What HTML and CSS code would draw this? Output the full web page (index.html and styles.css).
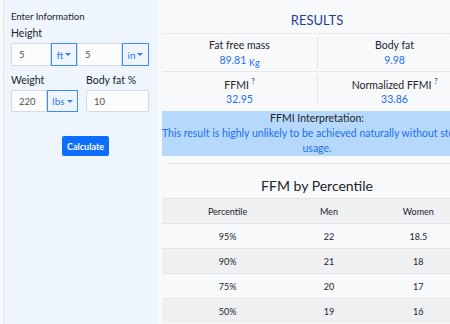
FILE: index.html
```html
<!DOCTYPE html>
<html lang="en">
<head>
    <meta charset="UTF-8">
    <meta name="viewport" content="width=device-width, initial-scale=1.0">
    <title>FFMI Calculator</title>
    <link rel="stylesheet" href="styles.css">
</head>
<body>
    <div class="page">
        <div class="sidebar">
            <div class="form-title">Enter Information</div>
            <div class="field-label">Height</div>
            <div class="input-row">
                <div class="input-box w-40">5</div>
                <div class="unit-btn w-26">ft <span class="caret"></span></div>
                <div class="input-box w-45">5</div>
                <div class="unit-btn w-27">in <span class="caret"></span></div>
            </div>

            <div class="pair-row">
                <div class="pair-col">
                    <div class="field-label">Weight</div>
                    <div class="input-row short">
                        <div class="input-box w-36">220</div>
                        <div class="unit-btn w-31">lbs <span class="caret"></span></div>
                    </div>
                </div>
                <div class="pair-col">
                    <div class="field-label">Body fat %</div>
                    <div class="input-row short">
                        <div class="input-box w-63">10</div>
                    </div>
                </div>
            </div>

            <button class="calc-btn">Calculate</button>
        </div>

        <div class="main">
            <h2 class="results-title">RESULTS</h2>

            <div class="result-grid">
                <div class="result-cell first-row">
                    <div class="result-label">Fat free mass</div>
                    <div class="result-value">89.81 <span class="unit">Kg</span></div>
                </div>
                <div class="result-cell first-row divided">
                    <div class="result-label">Body fat</div>
                    <div class="result-value">9.98</div>
                </div>
                <div class="result-cell">
                    <div class="result-label">FFMI <sup>?</sup></div>
                    <div class="result-value">32.95</div>
                </div>
                <div class="result-cell divided">
                    <div class="result-label">Normalized FFMI <sup>?</sup></div>
                    <div class="result-value">33.86</div>
                </div>
            </div>

            <div class="interpretation">
                <div class="interp-title">FFMI Interpretation:</div>
                <div class="interp-text">This result is highly unlikely to be achieved naturally without steroid usage.</div>
            </div>

            <h3 class="table-title">FFM by Percentile</h3>
            <table class="pct-table">
                <thead>
                    <tr><th class="c1">Percentile</th><th class="c2">Men</th><th class="c3">Women</th></tr>
                </thead>
                <tbody>
                    <tr><td>95%</td><td>22</td><td>18.5</td></tr>
                    <tr><td>90%</td><td>21</td><td>18</td></tr>
                    <tr><td>75%</td><td>20</td><td>17</td></tr>
                    <tr><td>50%</td><td>19</td><td>16</td></tr>
                </tbody>
            </table>
        </div>
    </div>
</body>
</html>
```

FILE: styles.css
```css
body {
    margin: 0;
    background-color: #f8f9fb;
    font-family: Lato, "Liberation Sans", sans-serif;
    color: #212529;
    overflow: hidden;
}

.page {
    display: flex;
    height: 324px;
}

/* Left form panel */
.sidebar {
    width: 142px;
    flex-shrink: 0;
    margin-left: 3px;
    padding: 10px 4px 0 7px;
    background-color: #eef5fc;
    border-left: 1px solid #dfe6ee;
}

.form-title {
    font-size: 9.5px;
    line-height: 13px;
}

.field-label {
    font-size: 10.5px;
    font-weight: 400;
    line-height: 14px;
    margin-top: 3px;
}

.input-row {
    display: flex;
    height: 23px;
    margin-top: 3px;
}

.input-row.short {
    height: 22px;
}

.input-box {
    box-sizing: border-box;
    border: 1px solid #d6dbe1;
    background-color: #fbfcfe;
    font-size: 9.5px;
    color: #5b5142;
    padding-left: 7px;
    display: flex;
    align-items: center;
}

.unit-btn {
    box-sizing: border-box;
    border: 1px solid #3d8bfd;
    color: #2f7cf6;
    font-size: 10px;
    display: flex;
    align-items: center;
    justify-content: center;
    gap: 2px;
}

.caret {
    width: 0;
    height: 0;
    border-left: 3px solid transparent;
    border-right: 3px solid transparent;
    border-top: 3px solid #2f7cf6;
}

.w-26 { width: 26px; }
.w-27 { width: 27px; }
.w-31 { width: 31px; }
.w-36 { width: 36px; }
.w-40 { width: 40px; }
.w-45 { width: 45px; }
.w-63 { width: 63px; }

.input-box:first-child {
    border-radius: 2px 0 0 2px;
}

.pair-row {
    display: flex;
    gap: 8px;
    margin-top: 4px;
}

.calc-btn {
    display: block;
    margin: 24px 0 0 51px;
    width: 47px;
    height: 20px;
    padding: 0;
    border: none;
    border-radius: 2px;
    background-color: #0d6efd;
    color: white;
    font-family: inherit;
    font-size: 9px;
    font-weight: 700;
}

/* Results area */
.main {
    width: 310px;
    flex-shrink: 0;
    margin-left: 5px;
}

.results-title {
    margin: 12px 0 0 0;
    font-size: 13px;
    font-weight: 400;
    line-height: 17px;
    text-align: center;
    color: #1c3f94;
}

.result-grid {
    display: grid;
    grid-template-columns: 155px 155px;
    margin-top: 4px;
    border-top: 1px dotted #dde1e6;
}

.result-cell {
    height: 37px;
    display: flex;
    flex-direction: column;
    align-items: center;
    justify-content: center;
    position: relative;
}

.result-cell.first-row {
    border-bottom: 1px solid #e3e6ea;
}

.result-cell.divided::before {
    content: "";
    position: absolute;
    left: 0;
    top: 3px;
    bottom: 3px;
    border-left: 1px solid #e1e4e8;
}

.result-label {
    font-size: 10.5px;
    line-height: 15px;
}

.result-label sup {
    font-size: 7px;
}

.result-value {
    font-size: 10.5px;
    line-height: 15px;
    color: #1a6ef5;
}

.unit {
    font-size: 9px;
    position: relative;
    top: 2px;
}

.interpretation {
    margin-top: 2px;
    height: 45px;
    background-color: #b6d9fb;
    text-align: center;
    font-size: 10.5px;
    line-height: 15px;
    white-space: nowrap;
    border-bottom: 7px solid #f8f9fb;
    box-shadow: 0 7px 0 -6px #dde1e6;
}

.interp-title {
    color: #212529;
}

.interp-text {
    color: #1a6ef5;
    white-space: normal;
    width: 330px;
    margin-left: -10px;
}

.table-title {
    margin: 14px 0 0 0;
    font-size: 14px;
    font-weight: 400;
    line-height: 18px;
    text-align: center;
}

.pct-table {
    margin-top: 3px;
    border-collapse: collapse;
    font-size: 9px;
    table-layout: fixed;
}

.pct-table th,
.pct-table td {
    height: 24px;
    padding: 0;
    text-align: center;
    font-weight: 400;
    border-top: 1px solid #e2e4e7;
}

.pct-table .c1 { width: 132px; }
.pct-table .c2 { width: 72px; }
.pct-table .c3 { width: 108px; }

.pct-table thead tr,
.pct-table tbody tr:nth-child(even) {
    background-color: #eff0f1;
}
```
